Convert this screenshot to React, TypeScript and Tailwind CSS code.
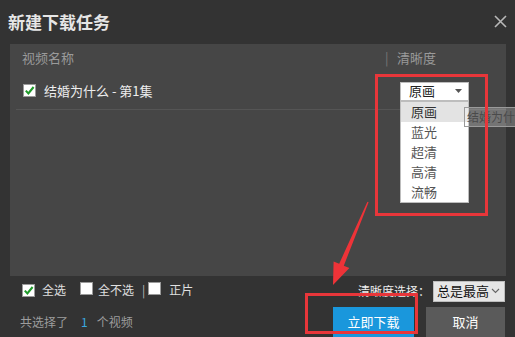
import React from 'react';

const font = { fontFamily: '"Noto Sans CJK SC", "Microsoft YaHei", sans-serif' };

function Check({ checked }: { checked: boolean }) {
  return (
    <span className="inline-flex items-center justify-center w-[13px] h-[13px] bg-white border border-[#9a9a9a] shrink-0">
      {checked && (
        <svg width="11" height="11" viewBox="0 0 11 11">
          <path d="M1.8 5.6 L4.4 8.4 L9.6 2" fill="none" stroke="#1f9a2a" strokeWidth="2.1" />
        </svg>
      )}
    </span>
  );
}

export default function App() {
  const options = ['原画', '蓝光', '超清', '高清', '流畅'];

  return (
    <div className="relative w-[515px] h-[337px] bg-[#333333] overflow-hidden text-[12px]" style={font}>
      {/* Title */}
      <div className="h-[44px] flex items-center justify-between pl-[8px] pr-[8px]">
        <span className="text-[17px] font-bold text-[#e6e6e6] -mt-[1px]">新建下载任务</span>
        <svg width="13" height="13" viewBox="0 0 13 13" className="-mt-[2px]">
          <path d="M1 1 L12 12 M12 1 L1 12" stroke="#b8b8b8" strokeWidth="1.6" />
        </svg>
      </div>

      {/* List panel */}
      <div className="ml-[10px] mr-[9px] h-[232px] bg-[#464646]">
        <div className="h-[28px] flex items-center text-[#9a9a9a] text-[13px]">
          <span className="pl-[12px] flex-1">视频名称</span>
          <span className="text-[#777] w-[12px]">|</span>
          <span className="w-[109px]">清晰度</span>
        </div>
        <div className="relative h-[38px] ml-[6px] border-b border-[#555555] flex items-center text-[13px]">
          <span className="ml-[7px]"><Check checked /></span>
          <span className="ml-[8px] text-[#eeeeee] flex-1">结婚为什么 - 第1集</span>
          <div className="relative w-[69px] mr-[37px] mt-[1px]">
            <div className="h-[19px] bg-white border border-[#bdbdbd] flex items-center justify-between pl-[8px] pr-[6px] text-[#222]">
              <span>原画</span>
              <svg width="7" height="4" viewBox="0 0 7 4"><path d="M0 0 H7 L3.5 4 Z" fill="#555" /></svg>
            </div>
            <div className="absolute left-0 top-[19px] w-[69px] bg-white border border-[#bdbdbd] z-10">
              {options.map((o, i) => (
                <div key={o} className={`h-[20px] flex items-center pl-[10px] ${i === 0 ? 'bg-[#e3e3e3] text-[#333]' : 'text-[#555]'}`}>
                  {o}
                </div>
              ))}
            </div>
            <div className="absolute left-[64px] top-[25px] w-[51px] h-[20px] border-y border-l border-[#9a9a9a] bg-white/25 text-[#4a4a4a] text-[12px] pl-[2px] flex items-center z-20 whitespace-nowrap">
              结婚为什
            </div>
          </div>
        </div>
      </div>

      {/* Bottom */}
      <div className="flex items-center justify-between h-[28px] pl-[22px] pr-[10px]">
        <div className="flex items-center text-[#e0e0e0] text-[12px]">
          <Check checked />
          <span className="ml-[7px]">全选</span>
          <span className="ml-[14px]"><Check checked={false} /></span>
          <span className="ml-[5px]">全不选</span>
          <span className="ml-[8px] text-[#bbbbbb]">|</span>
          <span className="ml-[3px]"><Check checked={false} /></span>
          <span className="ml-[8px]">正片</span>
        </div>
        <div className="flex items-center mt-[2px] whitespace-nowrap">
          <span className="text-[#eeeeee] mr-[3px]">清晰度选择：</span>
          <div className="w-[72px] h-[21px] bg-[#e6e6e6] border border-[#bdbdbd] flex items-center justify-between pl-[3px] pr-[4px] text-[#111] text-[13px]">
            <span>总是最高</span>
            <svg width="9" height="6" viewBox="0 0 9 6"><path d="M1 1 L4.5 4.5 L8 1" fill="none" stroke="#666" strokeWidth="1.1" /></svg>
          </div>
        </div>
      </div>
      <div className="flex items-end justify-between h-[33px] pl-[20px] pr-[10px]">
        <div className="flex items-center h-[30px] text-[#9d9d9d]">
          <span>共选择了</span>
          <span className="ml-[13px] text-[#3aa8e0]">1</span>
          <span className="ml-[9px]">个视频</span>
        </div>
        <div className="flex gap-[12px]">
          <button className="w-[81px] h-[30px] bg-[#1a97dc] text-white text-[13px]">立即下载</button>
          <button className="w-[79px] h-[30px] bg-[#5a5a5a] text-white text-[13px]">取消</button>
        </div>
      </div>

      {/* Annotations */}
      <div className="absolute left-[375px] top-[74px] w-[113px] h-[142px] border-[3px] border-[#e8363a] pointer-events-none z-30" />
      <div className="absolute left-[305px] top-[293px] w-[113px] h-[41px] border-[3px] border-[#e8363a] pointer-events-none z-30" />
      <svg className="absolute left-0 top-0 pointer-events-none z-30" width="515" height="337" viewBox="0 0 515 337">
        <polygon
          points="368.6,202.2 343.8,265.7 349.4,268 333,285 333.6,261.4 339.2,263.7 367.4,201.8"
          fill="#ee3338"
        />
      </svg>
    </div>
  );
}
